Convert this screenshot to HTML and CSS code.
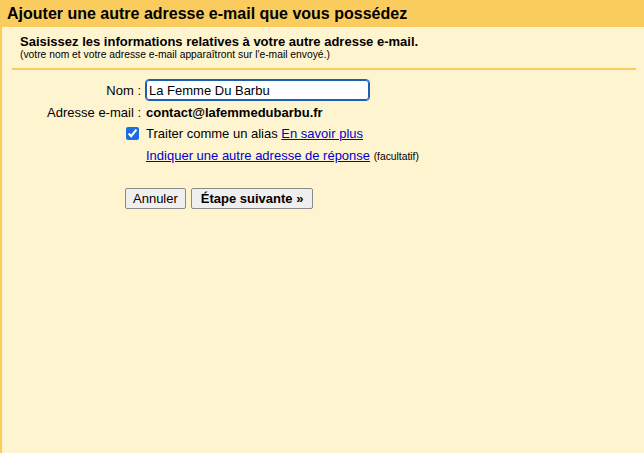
FILE: index.html
```html
<!DOCTYPE html>
<html lang="fr">
<head>
<meta charset="utf-8">
<title>Ajouter une autre adresse e-mail</title>
<link rel="stylesheet" href="styles.css">
</head>
<body>
<div class="dialog">
  <div class="header"><h1 class="title">Ajouter une autre adresse e-mail que vous possédez</h1></div>
  <div class="content">
    <div class="intro">
      <p class="lead">Saisissez les informations relatives à votre autre adresse e-mail.</p>
      <p class="note">(votre nom et votre adresse e-mail apparaîtront sur l'e-mail envoyé.)</p>
    </div>
    <div class="rule"></div>
    <div class="form">
      <div class="row row-name">
        <label class="label" for="nom">Nom :</label>
        <div class="value"><input id="nom" class="text-input" type="text" value="La Femme Du Barbu"></div>
      </div>
      <div class="row row-email">
        <div class="label">Adresse e-mail :</div>
        <div class="value email">contact@lafemmedubarbu.fr</div>
      </div>
      <div class="row row-alias">
        <div class="label"><input class="check" type="checkbox" checked></div>
        <div class="value">Traiter comme un alias <a class="link" href="#">En savoir plus</a></div>
      </div>
      <div class="row row-reply">
        <div class="label"></div>
        <div class="value"><a class="link" href="#">Indiquer une autre adresse de réponse</a> <span class="optional">(facultatif)</span></div>
      </div>
      <div class="actions">
        <button class="btn" type="button">Annuler</button>
        <button class="btn btn-primary" type="button">Étape suivante »</button>
      </div>
    </div>
  </div>
</div>
</body>
</html>
```
FILE: styles.css
```css
html, body {
  margin: 0;
  padding: 0;
  height: 100%;
}
body {
  font-family: "Liberation Sans", Arial, sans-serif;
  color: #000;
  background: #fff4d0;
}
.dialog {
  display: flex;
  flex-direction: column;
  min-height: 100%;
}
.header {
  background: #f9cc5d;
  height: 27px;
  display: flex;
  align-items: center;
  padding-left: 7px;
}
.title {
  margin: 0;
  font-size: 16px;
  font-weight: bold;
  line-height: 20px;
}
.content {
  flex: 1;
  border-left: 2px solid #f9cc5d;
  background: #fff4d0;
}
.intro {
  padding: 7px 0 0 18px;
}
.lead {
  margin: 0;
  font-size: 13px;
  font-weight: bold;
  line-height: 15px;
}
.note {
  margin: 0;
  font-size: 10.3px;
  line-height: 12px;
}
.rule {
  height: 2px;
  background: #f9cc5d;
  margin: 7px 8px 0 10px;
}
.form {
  padding-top: 9px;
  font-size: 13px;
}
.row {
  display: grid;
  grid-template-columns: 139px 1fr;
  column-gap: 5px;
  align-items: center;
}
.label {
  text-align: right;
  display: flex;
  justify-content: flex-end;
  align-items: center;
}
.row-name {
  height: 22px;
}
.row-email {
  height: 22px;
}
.row-alias {
  height: 21px;
}
.row-reply {
  height: 22px;
}
.text-input {
  width: 223px;
  height: 20px;
  box-sizing: border-box;
  font-family: "Liberation Sans", Arial, sans-serif;
  font-size: 13px;
  padding: 1px 2px;
  border: 1px solid #1a5fb4;
  border-radius: 3px;
  outline: 1px solid #1a5fb4;
  background: #fff;
  color: #000;
  margin: 0;
}
.email {
  font-weight: bold;
}
.check {
  width: 13px;
  height: 13px;
  margin: 0 2px 0 0;
  accent-color: #1a6fe0;
}
.link {
  color: #0000cc;
  text-decoration: underline;
}
.optional {
  font-size: 10.3px;
}
.actions {
  display: flex;
  gap: 5px;
  margin: 22px 0 0 123px;
}
.btn {
  font-family: "Liberation Sans", Arial, sans-serif;
  font-size: 13px;
  height: 21px;
  padding: 0 7px;
  background: #efefef;
  border: 1px solid #8a8a8a;
  border-radius: 2px;
  color: #000;
  margin: 0;
}
.btn-primary {
  font-weight: bold;
  padding: 0 9px;
}
```
